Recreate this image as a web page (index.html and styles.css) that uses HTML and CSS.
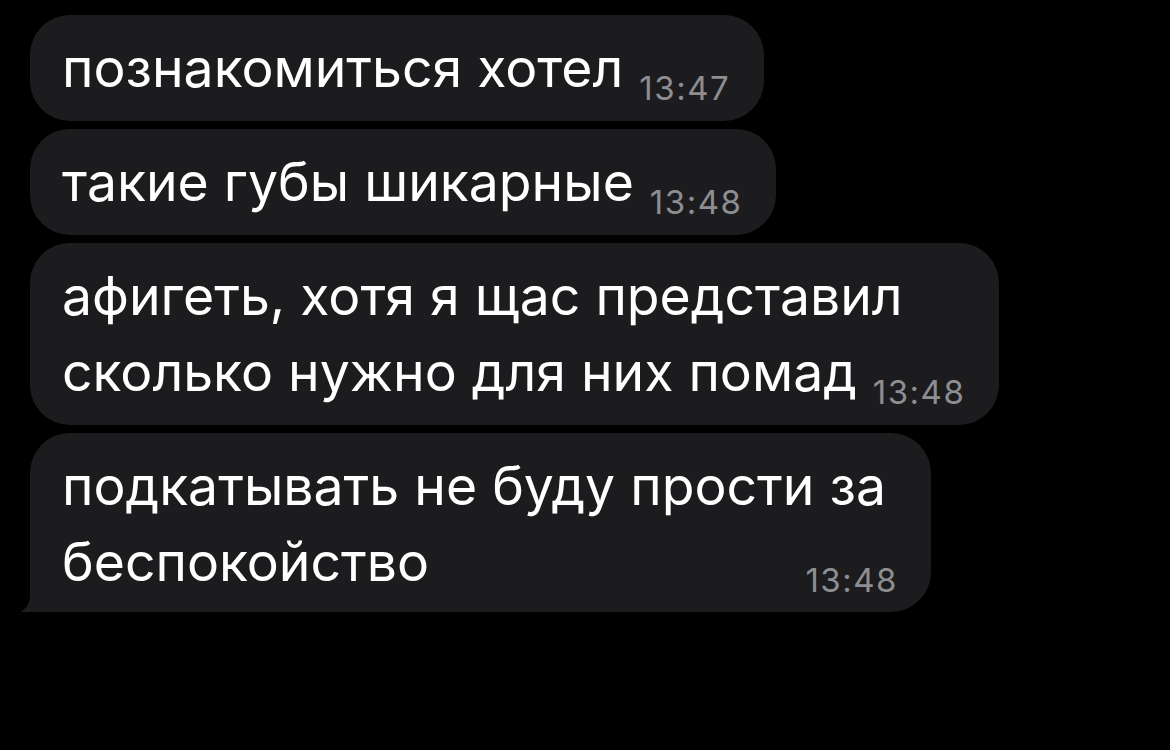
FILE: index.html
```html
<!DOCTYPE html>
<html lang="ru">
<head>
    <meta charset="UTF-8">
    <meta name="viewport" content="width=device-width, initial-scale=1.0">
    <title>Чат</title>
    <link rel="stylesheet" href="styles.css">
</head>
<body>
    <div class="chat">
        <div class="bubble">
            познакомиться хотел<span class="time">13:47</span>
        </div>
        <div class="bubble">
            такие губы шикарные<span class="time">13:48</span>
        </div>
        <div class="bubble">
            афигеть, хотя я щас представил<br>сколько нужно для них помад<span class="time">13:48</span>
        </div>
        <div class="bubble last">
            подкатывать не буду прости за<br>беспокойство
            <span class="time end">13:48</span>
            <svg class="tail" width="40" height="32" viewBox="0 0 40 32">
                <path d="M12 0 L12 14 C12 22 7 28 0 31 C8 32 16 30 22 26 C27 29 32 30 40 30 L40 0 Z" fill="#1c1c1e"/>
            </svg>
        </div>
    </div>
</body>
</html>
```

FILE: styles.css
```css
body {
    margin: 0;
    background-color: #000;
    font-family: 'Inter', 'Roboto', sans-serif;
    color: #fff;
}

.chat {
    display: flex;
    flex-direction: column;
    align-items: flex-start;
    gap: 8px;
    padding: 15px 0 0 30px;
}

.bubble {
    position: relative;
    background-color: #1c1c1e;
    border-radius: 40px;
    padding: 15px 34px 15px 32px;
    font-size: 53.5px;
    line-height: 76px;
}

/* последний пузырь с хвостиком слева */
.bubble.last {
    border-bottom-left-radius: 0;
    padding-right: 45px;
}

.time {
    display: inline-block;
    margin-left: 16px;
    font-size: 33px;
    line-height: 33px;
    color: #8d8d92;
    vertical-align: -13px;
    letter-spacing: 1.5px;
}

.time.end {
    display: block;
    text-align: right;
    margin-top: -36px;
    margin-right: -12px;
    margin-left: 0;
}

.tail {
    position: absolute;
    left: -12px;
    bottom: -2px;
}
```
